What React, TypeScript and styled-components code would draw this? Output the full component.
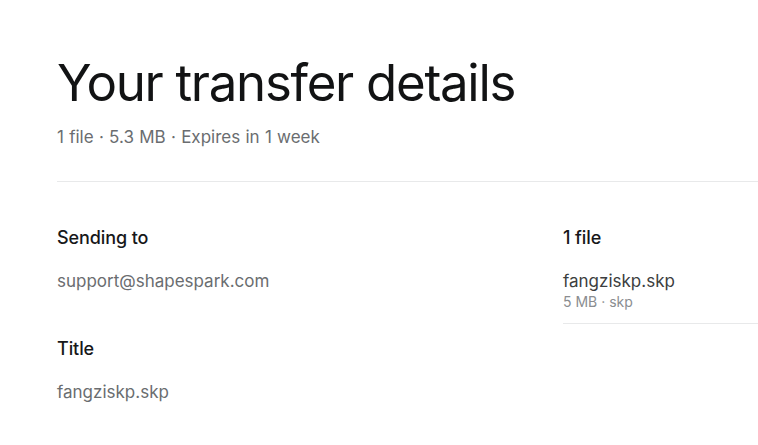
import React from "react"
import styled, { createGlobalStyle } from "styled-components"

const GlobalStyle = createGlobalStyle`
  html, body {
    margin: 0;
    padding: 0;
    background: #ffffff;
    font-family: Inter, "Liberation Sans", sans-serif;
    overflow: hidden;
  }
`

// styles
const Page = styled.div`
  width: 758px;
  height: 445px;
  padding: 51px 0 0 57px;
  box-sizing: border-box;
  overflow: hidden;
`

const Heading = styled.h1`
  margin: 0;
  font-size: 51px;
  font-weight: 400;
  line-height: 64px;
  letter-spacing: -1.3px;
  color: #121314;
`

const Meta = styled.p`
  margin: 10px 0 0;
  font-size: 17px;
  line-height: 24px;
  color: #6a6d70;
  word-spacing: 0.5px;
`

const Divider = styled.hr`
  border: none;
  border-top: 1px solid #e8e9ea;
  margin: 32px 0 0;
  width: 760px;
`

const Columns = styled.div`
  display: grid;
  grid-template-columns: 506px 260px;
  margin-top: 43px;
`

const Section = styled.section`
  display: flex;
  flex-direction: column;
  margin-bottom: 43px;
`

const Label = styled.h2`
  margin: 0;
  font-size: 18px;
  font-weight: 500;
  line-height: 26px;
  color: #17181a;
  letter-spacing: -0.1px;
`

const Value = styled.p`
  margin: 18px 0 0;
  font-size: 17px;
  line-height: 24px;
  color: #6a6d70;
`

const FileItem = styled.div`
  margin-top: 19px;
  padding-bottom: 12px;
  border-bottom: 1px solid #e8e9ea;
  display: flex;
  flex-direction: column;
`

const FileName = styled.span`
  font-size: 17px;
  line-height: 22px;
  color: #3c3e40;
`

const FileMeta = styled.span`
  margin-top: 1px;
  font-size: 14px;
  line-height: 18px;
  color: #8a8d90;
`

export default function App() {
  return (
    <>
      <GlobalStyle />
      <Page>
        <Heading>Your transfer details</Heading>
        <Meta>1 file · 5.3 MB · Expires in 1 week</Meta>
        <Divider />
        <Columns>
          <div>
            <Section>
              <Label>Sending to</Label>
              <Value>support@shapespark.com</Value>
            </Section>
            <Section>
              <Label>Title</Label>
              <Value>fangziskp.skp</Value>
            </Section>
          </div>
          <div>
            <Label>1 file</Label>
            <FileItem>
              <FileName>fangziskp.skp</FileName>
              <FileMeta>5 MB · skp</FileMeta>
            </FileItem>
          </div>
        </Columns>
      </Page>
    </>
  )
}
